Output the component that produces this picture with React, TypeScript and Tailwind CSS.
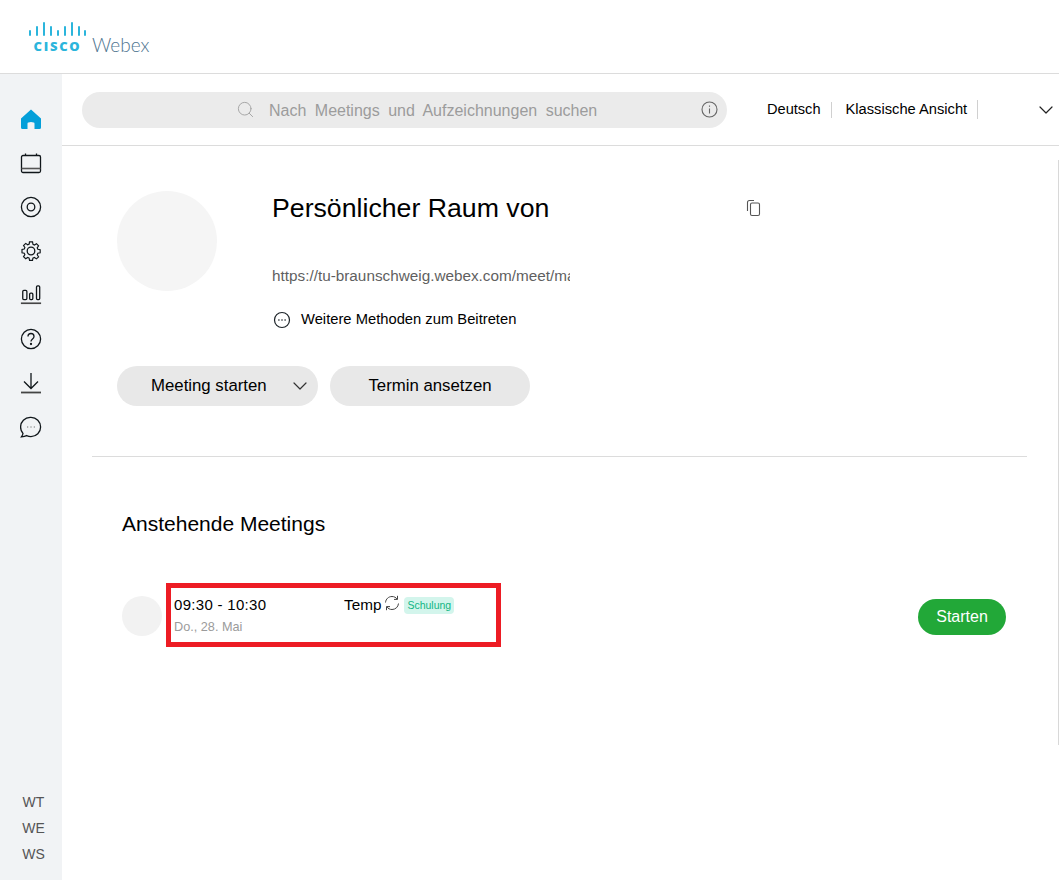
import { ChevronDown, Search } from "lucide-react";

// ** Sidebar icons, drawn to match the Webex nav strokes
const HomeIcon = () => (
  <svg width="22" height="22" viewBox="0 0 22 22">
    <path
      d="M11 1.500 L21 10.500 V19.500 Q21 21 19.500 21 H14.500 V15.500 Q14.500 14 11 14 Q7.500 14 7.500 15.500 V21 H2.500 Q1 21 1 19.500 V10.500 Z"
      fill="#049fd9"
    />
  </svg>
);

const CalendarIcon = () => (
  <svg width="22" height="22" viewBox="0 0 22 22" fill="none" stroke="#10161a" strokeWidth="1.300">
    <rect x="1.500" y="3.500" width="19" height="17" rx="1.500" />
    <path d="M5.500 1.500v2M16.500 1.500v2" />
    <path d="M1.500 16.500h19" stroke="#555" strokeWidth="1.600" />
  </svg>
);

const RecordIcon = () => (
  <svg width="22" height="22" viewBox="0 0 22 22" fill="none" stroke="#10161a" strokeWidth="1.300">
    <circle cx="11" cy="11" r="9.600" />
    <circle cx="11" cy="11" r="3.800" />
  </svg>
);

const GearIcon = () => (
  <svg width="22" height="22" viewBox="0 0 22 22" fill="none" stroke="#10161a" strokeWidth="1.300">
    <path d="M9.300 1.500h3.400l.5 2.700 1.600.7 2.300-1.500 2.300 2.400-1.500 2.200.7 1.700 2.600.5v3.400l-2.600.5-.7 1.600 1.500 2.300-2.400 2.300-2.200-1.500-1.700.7-.4 2.400H9.400l-.5-2.500-1.600-.7-2.200 1.500-2.400-2.400 1.500-2.200-.7-1.600-2.500-.5V9.900l2.500-.5.7-1.700-1.500-2.200 2.400-2.400 2.200 1.500 1.700-.7z" transform="translate(1.100 .6) scale(.9)" />
    <circle cx="11" cy="11" r="3.800" />
  </svg>
);

const ChartIcon = () => (
  <svg width="24" height="22" viewBox="0 0 24 22" fill="none" stroke="#10161a" strokeWidth="1.400">
    <rect x="3" y="6" width="4.500" height="10" rx="1.200" />
    <rect x="10.500" y="9" width="3.500" height="7" rx="1.200" />
    <rect x="18" y="1" width="3.500" height="15" rx="1.200" />
    <path d="M1 20h22" stroke="#444" strokeWidth="1.800" />
  </svg>
);

const HelpIcon = () => (
  <svg width="22" height="22" viewBox="0 0 22 22" fill="none" stroke="#10161a" strokeWidth="1.300">
    <circle cx="11" cy="11" r="9.600" />
    <path d="M8 8.500c0-4 6-4 6 0 0 2.400-3 2.400-3 5" />
    <circle cx="11" cy="16" r=".5" />
  </svg>
);

const DownloadIcon = () => (
  <svg width="22" height="22" viewBox="0 0 22 22" fill="none" stroke="#10161a" strokeWidth="1.300">
    <path d="M11 1v15M4 9.500l7 7 7-7" />
    <path d="M1 20.500h20" stroke="#444" strokeWidth="1.800" />
  </svg>
);

const ChatIcon = () => (
  <svg width="22" height="22" viewBox="0 0 22 22" fill="none" stroke="#10161a" strokeWidth="1.300">
    <path d="M11 1.400c5.400 0 9.600 4.200 9.600 9.600s-4.200 9.600-9.600 9.600c-1.600 0-3.100-.4-4.400-1-1.500.8-3.300 1.100-5.200 1.200.8-1 1.400-2.100 1.600-3.300-1.600-1.700-2.400-4-2.400-6.500 0-5.400 4.200-9.600 9.600-9.600z" />
    <path d="M7.200 11h1M10.500 11h1M13.800 11h1" stroke="#555" strokeWidth="1" />
  </svg>
);

const CopyIcon = () => (
  <svg width="16" height="18" viewBox="0 0 16 18" fill="none" stroke="#555" strokeWidth="1.100">
    <path d="M8 1.500H3.500Q1.500 1.500 1.500 3.500V12" />
    <rect x="4.500" y="4" width="9" height="12.500" rx="1.500" />
  </svg>
);

const InfoIcon = () => (
  <svg width="17" height="17" viewBox="0 0 17 17" fill="none" stroke="#666" strokeWidth="1.100">
    <circle cx="8.500" cy="8.500" r="7.500" />
    <path d="M8.500 7.500v5M8.500 4.500v1.200" />
  </svg>
);

const MoreIcon = () => (
  <svg width="18" height="18" viewBox="0 0 18 18" fill="none" stroke="#1c2328" strokeWidth="1.200">
    <circle cx="9" cy="9" r="7.500" />
    <path d="M5.300 9h1.200M8.400 9h1.200M11.500 9h1.200" strokeWidth="1.400" />
  </svg>
);

const RepeatIcon = () => (
  <svg width="16" height="16" viewBox="0 0 16 16" fill="none" stroke="#444" strokeWidth="1">
    <path d="M1.500 7.500C1.800 4 4.500 1.500 8 1.500c2.200 0 4 1 5.200 2.700M14.500 8.500c-.3 3.500-3 6-6.500 6-2.200 0-4-1-5.200-2.700" />
    <path d="M13.500 .8v3.600H10M2.500 15.200v-3.600H6" />
  </svg>
);

const CiscoLogo = () => (
  <div className="flex w-[57px] flex-col items-center">
    <svg width="57" height="14" viewBox="0 0 57 14" stroke="#2bb5dc" strokeWidth="2" strokeLinecap="round">
      <path d="M1 9v4M8 5v8M15 1v12M22 5v8M29 9v4M36 5v8M43 1v12M50 5v8M56 9v4" />
    </svg>
    <span className="mt-[3px] font-['Open_Sans',sans-serif] text-[13px] font-extrabold leading-[14px] tracking-[1.700px] text-[#2bb5dc]">
      CISCO
    </span>
  </div>
);

const navIcons = [
  <HomeIcon key="home" />,
  <CalendarIcon key="calendar" />,
  <RecordIcon key="record" />,
  <GearIcon key="gear" />,
  <ChartIcon key="chart" />,
  <HelpIcon key="help" />,
  <DownloadIcon key="download" />,
  <ChatIcon key="chat" />,
];

const App = () => {
  return (
    <div className="relative h-[880px] w-[1059px] overflow-hidden bg-white font-['Liberation_Sans',Arial,sans-serif] text-black">
      <header className="flex h-[74px] items-start gap-[6px] border-b border-[#dcdcdc] pl-[29px] pt-[22px]">
        <CiscoLogo />
        <span className="mt-[12px] font-['Lato',sans-serif] text-[19px] font-light leading-[22px] text-[#4f7590]">
          Webex
        </span>
      </header>

      <div className="flex h-[806px]">
        {/* Sidebar */}
        <aside className="flex w-[62px] flex-col items-center justify-between bg-[#f1f3f5] pb-[18px] pt-[34px]">
          <nav className="flex flex-col items-center gap-[22px]">
            {navIcons.map((icon, i) => (
              <div key={i} className="flex h-[22px] w-[22px] items-center justify-center">
                {icon}
              </div>
            ))}
          </nav>
          <div className="flex flex-col items-center gap-[11px] pl-[5px] text-[14px] leading-[15px] text-[#555]">
            <span>WT</span>
            <span>WE</span>
            <span>WS</span>
          </div>
        </aside>

        <main className="flex-1">
          {/* Search bar */}
          <div className="flex h-[72px] items-center border-b border-[#dcdcdc] pl-[20px]">
            <div className="flex h-[36px] w-[645px] shrink-0 items-center rounded-full bg-[#ebebeb] pl-[154px] pr-[9px]">
              <Search size={19} strokeWidth={1.200} className="text-[#a3a3a3]" />
              <span className="ml-[14px] mt-[2px] flex-1 text-[16px] text-[#9c9c9c] [word-spacing:4px]">
                Nach Meetings und Aufzeichnungen suchen
              </span>
              <InfoIcon />
            </div>
            <span className="ml-[40px] text-[14.600px] text-black">Deutsch</span>
            <span className="ml-[10px] h-[16px] w-px bg-[#d0d0d0]" />
            <span className="ml-[14px] text-[14.700px] text-black">Klassische Ansicht</span>
            <span className="ml-[10px] h-[19px] w-px bg-[#d0d0d0]" />
            <ChevronDown size={24} strokeWidth={1.200} className="ml-[56px] shrink-0 text-[#222]" />
          </div>

          {/* Personal room */}
          <section className="flex pl-[55px] pt-[45px]">
            <div className="h-[100px] w-[100px] rounded-full bg-[#f5f5f5]" />
            <div className="ml-[55px] flex-1">
              <div className="flex h-[34px] items-center">
                <h1 className="w-[474px] text-[26.700px] font-normal leading-[34px]">Persönlicher Raum von</h1>
                <CopyIcon />
              </div>
              <p className="mt-[43px] w-[298px] overflow-hidden whitespace-nowrap text-[15.300px] leading-[16px] text-[#5f5f5f]">
                https://tu-braunschweig.webex.com/meet/mail
              </p>
              <div className="mt-[25px] flex h-[22px] items-center gap-[10px] text-[14.750px]">
                <span className="ml-px">
                  <MoreIcon />
                </span>
                <span className="mb-[2px]">Weitere Methoden zum Beitreten</span>
              </div>
            </div>
          </section>

          <div className="mt-[35px] flex gap-[12px] pl-[55px]">
            <button className="flex h-[40px] w-[201px] items-center rounded-full bg-[#e8e8e8] pl-[34px] text-[16.800px]">
              Meeting starten
              <ChevronDown size={24} strokeWidth={1.200} className="ml-[21px] text-[#333]" />
            </button>
            <button className="h-[40px] w-[200px] rounded-full bg-[#e8e8e8] text-[16.800px]">Termin ansetzen</button>
          </div>

          <div className="ml-[30px] mt-[50px] h-px w-[935px] bg-[#dcdcdc]" />

          {/* Upcoming meetings */}
          <h2 className="ml-[60px] mt-[55px] text-[21px] font-normal leading-[24px]">Anstehende Meetings</h2>

          <div className="mt-[47px] flex items-start pl-[60px]">
            <div className="mt-[13px] h-[40px] w-[40px] rounded-full bg-[#f2f2f2]" />
            <div className="ml-[4px] h-[64px] w-[335px] border-[5px] border-[#ed1c24] pl-[3px] pt-[8px]">
              <div className="flex h-[18px] items-center">
                <span className="w-[170px] text-[15px] tracking-[0.300px]">09:30 - 10:30</span>
                <span className="text-[15.300px]">Temp</span>
                <span className="mb-[4px] ml-[3px]">
                  <RepeatIcon />
                </span>
                <span className="ml-[4px] rounded-[4px] bg-[#d3f5ec] px-[3px] text-[10.500px] leading-[17px] text-[#0fb583]">
                  Schulung
                </span>
              </div>
              <p className="mt-[6px] text-[12.700px] leading-[15px] text-[#9b9b9b]">Do., 28. Mai</p>
            </div>
            <button className="ml-[417px] mt-[16px] h-[36px] w-[88px] rounded-full bg-[#22a838] text-[16px] text-white">
              Starten
            </button>
          </div>
        </main>
      </div>

      {/* Scrollbar edge */}
      <div className="absolute right-0 top-[160px] h-[585px] w-px bg-[#d8d8d8]" />
    </div>
  );
};

export default App;
